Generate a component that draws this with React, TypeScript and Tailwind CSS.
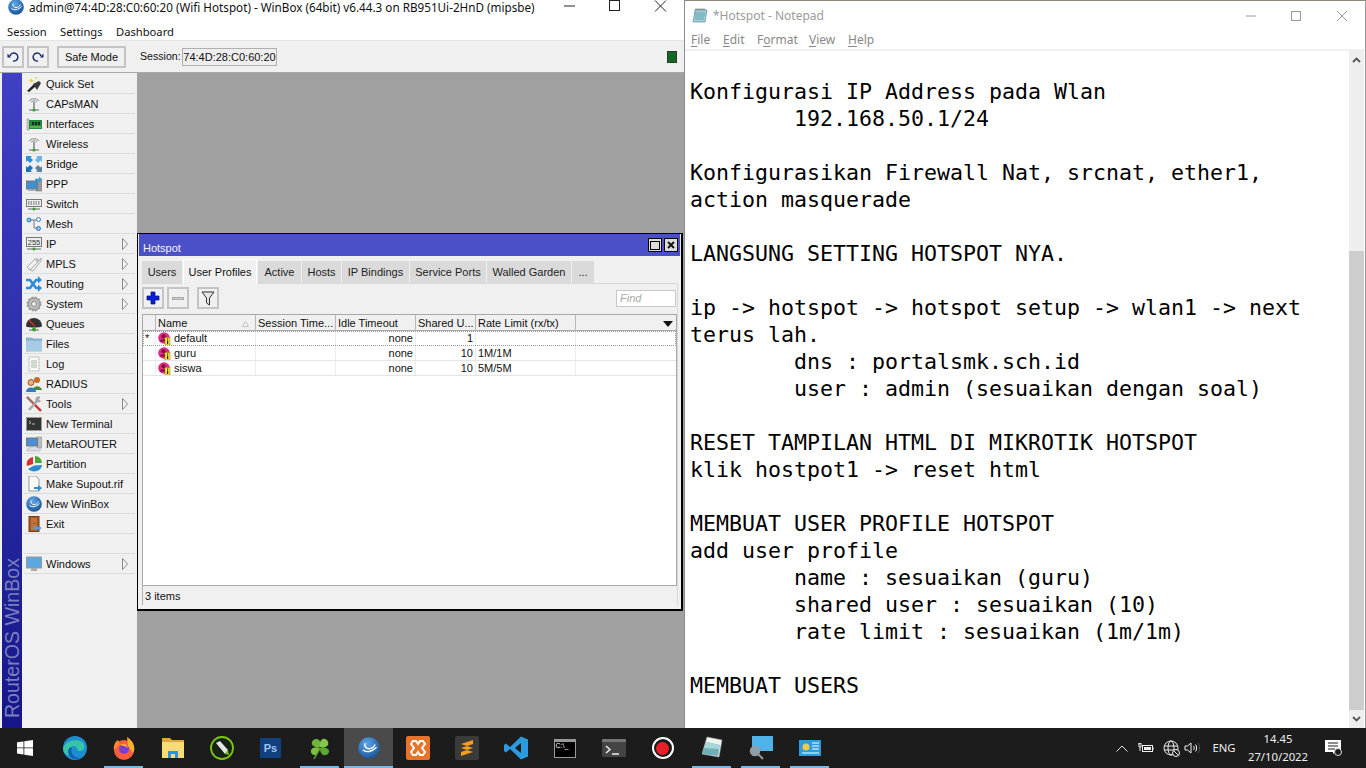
import React from "react";

const wb = { fontFamily: '"Liberation Sans", Arial, sans-serif' };
const seg = { fontFamily: '"Noto Sans", "Open Sans", sans-serif' };

function Sphere({ s = 16 }: { s?: number }) {
  return (
    <svg width={s} height={s} viewBox="0 0 16 16">
      <defs>
        <radialGradient id="sph" cx="0.4" cy="0.3" r="0.8">
          <stop offset="0" stopColor="#5fa8e8" />
          <stop offset="1" stopColor="#134a8e" />
        </radialGradient>
      </defs>
      <circle cx="8" cy="8" r="7.8" fill="url(#sph)" />
      <path d="M3.5 9.5C6 11.5 10 11 13.5 7.5M5 4.5C4.5 7 6 8.5 8 8.5S11.5 7.5 12.5 5.5" stroke="#fff" strokeWidth="1" fill="none" />
    </svg>
  );
}

const Antenna = () => (
  <svg width="16" height="16" viewBox="0 0 16 16">
    <path d="M3 5C5 2 11 2 13 5M5 6C6.5 4.5 9.5 4.5 11 6" stroke="#8a8a8a" fill="none" />
    <path d="M8 6V13" stroke="#777" strokeWidth="1.4" />
    <path d="M3 14H13" stroke="#666" />
    <circle cx="8" cy="14" r="1.6" fill="#2aa52a" />
  </svg>
);

function Icon({ n }: { n: string }) {
  switch (n) {
    case "wand":
      return (
        <svg width="16" height="16" viewBox="0 0 16 16">
          <path d="M1 15L8 8L10 10L3 16Z" fill="#222" />
          <path d="M7 8L13 5L15 7L11 14Z" fill="#3a3a3a" />
          <path d="M5 2L6 4L8 4L6.5 5.5L5 7L4 5L2 4.500L4 4Z" fill="#e8d44a" />
          <circle cx="10" cy="2" r="1" fill="#e8d44a" />
          <circle cx="13" cy="4" r="0.8" fill="#f3e98c" />
        </svg>
      );
    case "ant":
      return <Antenna />;
    case "if":
      return (
        <svg width="16" height="16" viewBox="0 0 16 16">
          <path d="M1 3H3V14H1Z" fill="#d8d8d8" stroke="#888" strokeWidth=".6" />
          <rect x="3" y="4" width="13" height="9" fill="#1f8a3a" />
          <rect x="6" y="6" width="2" height="3" fill="#222" />
          <rect x="9" y="6" width="2" height="3" fill="#222" />
          <rect x="12" y="6" width="2" height="3" fill="#222" />
          <path d="M4 11H15" stroke="#a8d060" />
        </svg>
      );
    case "bridge":
      return (
        <svg width="16" height="16" viewBox="0 0 16 16" fill="#2f8fd8">
          <path d="M0 0H6L4.500 1.500L7 4L4 7L1.500 4.500L0 6Z" />
          <path d="M16 0V6L14.500 4.500L12 7L9 4L11.500 1.500L10 0Z" fill="#6ab4ea" />
          <path d="M0 16V10L1.500 11.500L4 9L7 12L4.500 14.500L6 16Z" fill="#1a6fb8" />
          <path d="M16 16H10L11.500 14.500L9 12L12 9L14.500 11.500L16 10Z" fill="#5d7f9e" />
        </svg>
      );
    case "ppp":
      return (
        <svg width="16" height="16" viewBox="0 0 16 16">
          <rect x="10" y="3" width="6" height="12" fill="#9a9a9a" stroke="#666" strokeWidth=".5" />
          <rect x="0.500" y="5" width="11" height="8" fill="#3f8fd4" stroke="#777" />
          <rect x="2" y="13" width="8" height="2" fill="#aaa" />
          <path d="M9 3H13V0.500L16 3.500L13 6.500V5H9Z" fill="#3a9ae0" />
        </svg>
      );
    case "switch":
      return (
        <svg width="16" height="16" viewBox="0 0 16 16">
          <rect x="0.500" y="3.500" width="15" height="7" fill="#eee" stroke="#777" />
          <path d="M2 6H14M2 8H14" stroke="#555" strokeDasharray="1.500 1" />
          <path d="M2 13H14" stroke="#666" />
          <circle cx="8" cy="13" r="1.500" fill="#2aa52a" />
        </svg>
      );
    case "mesh":
      return (
        <svg width="16" height="16" viewBox="0 0 16 16">
          <path d="M3 4H8M8 4V12H12M8 4H12" stroke="#777" fill="none" />
          <circle cx="3" cy="4" r="2" fill="#8cc0ea" stroke="#2f78b8" />
          <circle cx="12.500" cy="3.500" r="2" fill="#fff" stroke="#2f78b8" />
          <circle cx="12.500" cy="12.500" r="2" fill="#8cc0ea" stroke="#2f78b8" />
        </svg>
      );
    case "ip":
      return (
        <svg width="16" height="16" viewBox="0 0 16 16">
          <rect x="0.500" y="1.500" width="15" height="9" fill="#eee" stroke="#777" />
          <text x="8" y="9" fontSize="7.5" textAnchor="middle" fill="#333" style={wb}>255</text>
          <path d="M1 13H15" stroke="#666" />
          <circle cx="8" cy="13" r="1.500" fill="#2aa52a" />
        </svg>
      );
    case "mpls":
      return (
        <svg width="16" height="16" viewBox="0 0 16 16" fill="#f0f0f0" stroke="#aaa">
          <path d="M1 11L9 3L12 3L12 6L4 14Z" />
          <path d="M4 14L12 6L15 2L15 5L7 15Z" />
          <circle cx="11" cy="4.500" r=".8" />
        </svg>
      );
    case "routing":
      return (
        <svg width="16" height="16" viewBox="0 0 16 16" fill="none" stroke="#2f8ad6" strokeWidth="2.600">
          <path d="M0 4H4L10 12H13" />
          <path d="M0 12H4L10 4H13" />
          <path d="M12 0L16 4L12 7.500Z" fill="#2f8ad6" strokeWidth="0" />
          <path d="M12 8.500L16 12L12 16Z" fill="#2f8ad6" strokeWidth="0" />
        </svg>
      );
    case "system":
      return (
        <svg width="16" height="16" viewBox="0 0 16 16">
          <circle cx="8" cy="8" r="6" fill="#bbb" stroke="#888" />
          <circle cx="8" cy="8" r="6.500" fill="none" stroke="#999" strokeWidth="2" strokeDasharray="2 1.400" />
          <circle cx="8" cy="8" r="2.500" fill="#f0f0f0" stroke="#888" />
        </svg>
      );
    case "queues":
      return (
        <svg width="16" height="16" viewBox="0 0 16 16">
          <path d="M0 10A8 8 0 0 1 16 10C16 12 0 12 0 10Z" fill="#333" />
          <path d="M3 4L8.500 10" stroke="#e03030" strokeWidth="1.300" />
          <path d="M3 14H13" stroke="#666" />
          <circle cx="8" cy="13.500" r="2" fill="#2aa52a" />
        </svg>
      );
    case "files":
      return (
        <svg width="16" height="16" viewBox="0 0 16 16">
          <path d="M0 2H6L7 3H16V15H0Z" fill="#8fbad8" stroke="#6a93b0" strokeWidth=".6" />
          <path d="M0 5H16V15H0Z" fill="#a7cbe4" />
        </svg>
      );
    case "log":
      return (
        <svg width="16" height="16" viewBox="0 0 16 16">
          <path d="M3 1H13V15H3Z" fill="#f8f8f8" stroke="#aaa" strokeDasharray="1 .5" />
          <path d="M5 5H11M5 7H11M5 9H11M5 11H11" stroke="#aab8a8" />
        </svg>
      );
    case "radius":
      return (
        <svg width="16" height="16" viewBox="0 0 16 16">
          <circle cx="11" cy="4" r="3" fill="#c86a20" />
          <path d="M7 14C7 9 15 9 16 14Z" fill="#4a8a3a" />
          <circle cx="5" cy="6.500" r="3" fill="#e8b080" stroke="#9a5a20" />
          <path d="M0 16C0 10 10 10 10 16Z" fill="#3a78c0" />
        </svg>
      );
    case "tools":
      return (
        <svg width="16" height="16" viewBox="0 0 16 16">
          <path d="M1 1L15 15" stroke="#d02a2a" strokeWidth="2.400" />
          <path d="M1 1L7 7" stroke="#888" strokeWidth="1.600" />
          <path d="M3 14L11 5" stroke="#aaa" strokeWidth="2.400" />
          <path d="M10 5A3 3 0 0 1 14 1L12.500 3.500L14.500 5A3 3 0 0 1 10 5Z" fill="#aaa" stroke="#888" strokeWidth=".5" />
        </svg>
      );
    case "term":
      return (
        <svg width="16" height="16" viewBox="0 0 16 16">
          <rect x="0.500" y="1.500" width="15" height="13" fill="#333" stroke="#999" />
          <path d="M3 5L5 6.500L3 8M6 8H9" stroke="#ddd" fill="none" strokeWidth=".8" />
        </svg>
      );
    case "meta":
      return (
        <svg width="16" height="16" viewBox="0 0 16 16">
          <rect x="11" y="1" width="5" height="11" fill="#bbb" stroke="#888" strokeWidth=".5" />
          <rect x="0.500" y="2" width="11" height="8" fill="#4a90d8" stroke="#777" />
          <path d="M1 15C0 12 4 11 5 12C6 10 11 10 11 12C14 11 15 14 14 15Z" fill="#d8dfe6" stroke="#999" strokeWidth=".5" />
        </svg>
      );
    case "part":
      return (
        <svg width="16" height="16" viewBox="0 0 16 16">
          <path d="M7 1A7 7 0 0 0 1 10L7 8Z" fill="#d83030" />
          <path d="M9 0A7 7 0 0 1 16 7H9Z" fill="#4aa83a" />
          <path d="M16 9A8 7 0 0 1 2 13L8 9.500Z" fill="#2a8ad0" />
        </svg>
      );
    case "supout":
      return (
        <svg width="16" height="16" viewBox="0 0 16 16">
          <path d="M3 0H10L13 3V15H3Z" fill="#fafafa" stroke="#999" />
          <path d="M8 11H12V9L16 12L12 15.500V13H8Z" fill="#2f8ad6" />
        </svg>
      );
    case "sphere":
      return <Sphere />;
    case "exit":
      return (
        <svg width="16" height="16" viewBox="0 0 16 16">
          <rect x="3" y="0.500" width="10" height="15" fill="#a85a28" stroke="#6e3a18" />
          <rect x="5" y="2" width="6" height="5" fill="#c07238" />
          <rect x="5" y="8" width="6" height="6" fill="#c07238" />
          <path d="M7 12L11 9V11H15V13H11V15Z" fill="#4aa0e0" />
        </svg>
      );
    case "win":
      return (
        <svg width="16" height="16" viewBox="0 0 16 16">
          <rect x="0.500" y="1" width="15" height="11" fill="#5aa8e0" stroke="#999" />
          <rect x="5" y="12" width="6" height="3" fill="#aaa" />
        </svg>
      );
  }
  return null;
}

const items: [string, string, boolean][] = [
  ["Quick Set", "wand", false],
  ["CAPsMAN", "ant", false],
  ["Interfaces", "if", false],
  ["Wireless", "ant", false],
  ["Bridge", "bridge", false],
  ["PPP", "ppp", false],
  ["Switch", "switch", false],
  ["Mesh", "mesh", false],
  ["IP", "ip", true],
  ["MPLS", "mpls", true],
  ["Routing", "routing", true],
  ["System", "system", true],
  ["Queues", "queues", false],
  ["Files", "files", false],
  ["Log", "log", false],
  ["RADIUS", "radius", false],
  ["Tools", "tools", true],
  ["New Terminal", "term", false],
  ["MetaROUTER", "meta", false],
  ["Partition", "part", false],
  ["Make Supout.rif", "supout", false],
  ["New WinBox", "sphere", false],
  ["Exit", "exit", false],
  ["", "", false],
  ["Windows", "win", true],
];

function Row({ label, icon, arrow }: { label: string; icon: string; arrow: boolean }) {
  return (
    <div className="h-5 ml-[2px] mr-[2px] flex items-center border-b border-[#dcdcdc] text-[11px] text-[#111] relative">
      <span className="w-[22px] pl-[2px] flex shrink-0">{icon && <Icon n={icon} />}</span>
      <span className="pt-[2px]">{label}</span>
      {arrow && (
        <svg className="ml-auto mr-[7px]" width="6" height="12" viewBox="0 0 6 12">
          <path d="M0.500 0.500L5.500 6L0.500 11.500Z" fill="#f4f4f4" stroke="#8a8a8a" />
        </svg>
      )}
    </div>
  );
}

function TbBtn({ children, w }: { children: React.ReactNode; w: string }) {
  return (
    <div className={`${w} h-[22px] border-2 border-[#c4c4c4] bg-[#f0f0f0] flex items-center justify-center text-[11px] text-[#111]`}>
      {children}
    </div>
  );
}

function UserIcon() {
  return (
    <svg width="13" height="13" viewBox="0 0 13 13" className="shrink-0">
      <circle cx="6" cy="6" r="5.800" fill="#e02a85" />
      <circle cx="5.500" cy="4.300" r="2" fill="#7a1040" />
      <path d="M1.500 9.500C3 6.500 8 6.500 9 9.500Z" fill="#7a1040" />
      <rect x="7" y="5.500" width="5" height="7.500" fill="#f6e73c" stroke="#8a7a00" strokeWidth=".5" />
      <rect x="9" y="6.500" width="1.200" height="1.200" fill="#222" />
      <rect x="9" y="8.500" width="1.200" height="3.500" fill="#222" />
    </svg>
  );
}

const cols = "grid grid-cols-[13px_100px_80px_80px_60px_100px_1fr]";

const tabs: [string, string][] = [
  ["Users", "w-[40px]"],
  ["User Profiles", "w-[74px]"],
  ["Active", "w-[43px]"],
  ["Hosts", "w-[39px]"],
  ["IP Bindings", "w-[67px]"],
  ["Service Ports", "w-[76px]"],
  ["Walled Garden", "w-[84px]"],
  ["...", "w-[22px]"],
];

const rows = [
  ["*", "default", "", "none", "1", ""],
  ["", "guru", "", "none", "10", "1M/1M"],
  ["", "siswa", "", "none", "10", "5M/5M"],
];

function Hotspot() {
  return (
    <div className="absolute left-0 top-[160px] w-[546px] h-[378px] border border-black border-r-2 border-b-2 bg-[#f0f0f0] flex flex-col text-[11px] text-[#111]" style={wb}>
      <div className="h-[22px] bg-[#4b50c8] text-white flex items-center pl-[4px] pr-[2px] shrink-0 border-l border-r border-[#e8e8e8]">
        <span className="text-[#f2f2f2] mt-[6px]">Hotspot</span>
        <div className="ml-auto flex gap-[2px]">
          <div className="w-[14px] h-[14px] bg-[#dcdcdc] border border-black flex items-center justify-center">
            <div className="w-[10px] h-[9px] border border-black" />
          </div>
          <div className="w-[14px] h-[14px] bg-[#dcdcdc] border border-black flex items-center justify-center">
            <svg width="8" height="8" viewBox="0 0 8 8"><path d="M1 1L7 7M7 1L1 7" stroke="#111" strokeWidth="1.800" /></svg>
          </div>
        </div>
      </div>
      <div className="h-[27px] pl-[4px] flex items-end gap-px shrink-0">
        {tabs.map(([t, w], i) =>
          i === 1 ? (
            <div key={t} className={`${w} h-[25px] bg-[#f0f0f0] border-t border-l border-r border-white flex items-start justify-center pt-[4px] -mb-px relative`}>{t}</div>
          ) : (
            <div key={t} className={`${w} h-[22px] bg-[#dadada] flex items-center justify-center text-[#222]`}>{t}</div>
          )
        )}
      </div>
      <div className="flex-1 flex flex-col ml-[4px] mr-[3px] mb-[4px] border-t border-r border-[#d8d8d8] min-h-0">
        <div className="h-[30px] flex items-start pt-[3px] shrink-0 pr-[1px]">
          <TbBtn w="w-[22px]">
            <svg width="14" height="14" viewBox="0 0 14 14"><path d="M5 1H9V5H13V9H9V13H5V9H1V5H5Z" fill="#0a1fd8" stroke="#00106a" strokeWidth=".7" /></svg>
          </TbBtn>
          <div className="w-[3px]" />
          <TbBtn w="w-[22px]">
            <div className="w-[12px] h-[3px] bg-[#cfcfcf] border border-[#aaa]" />
          </TbBtn>
          <div className="w-[8px]" />
          <TbBtn w="w-[22px]">
            <svg width="14" height="15" viewBox="0 0 14 15"><path d="M1 1H13L8.500 7V14L5.500 12V7Z" fill="#e6e6e6" stroke="#333" /></svg>
          </TbBtn>
          <div className="ml-auto mt-[3px] w-[60px] h-[17px] bg-white border border-[#c8c8c8] text-[#aaa] italic pl-[3px] leading-[15px]">Find</div>
        </div>
        <div className="flex-1 flex flex-col bg-white border border-[#a8a8a8] min-h-0 overflow-hidden">
          <div className={`${cols} h-[16px] bg-[#f0f0f0] border-b border-[#a8a8a8] shrink-0 leading-[17px]`}>
            <div className="border-r border-[#b8b8b8]" />
            <div className="border-r border-[#b8b8b8] pl-[2px] flex items-center">
              Name
              <svg className="ml-auto mr-[6px]" width="7" height="6" viewBox="0 0 7 6"><path d="M3.500 0.500L6.500 5.500H0.500Z" fill="#f4f4f4" stroke="#c0c0c0" /></svg>
            </div>
            <div className="border-r border-[#b8b8b8] pl-[2px] overflow-hidden whitespace-nowrap">Session Time...</div>
            <div className="border-r border-[#b8b8b8] pl-[2px] overflow-hidden whitespace-nowrap">Idle Timeout</div>
            <div className="border-r border-[#b8b8b8] pl-[2px] overflow-hidden whitespace-nowrap">Shared U...</div>
            <div className="border-r border-[#b8b8b8] pl-[2px] overflow-hidden whitespace-nowrap">Rate Limit (rx/tx)</div>
            <div className="flex items-center justify-end pr-[3px]">
              <svg width="10" height="6" viewBox="0 0 10 6"><path d="M0 0H10L5 6Z" fill="#111" /></svg>
            </div>
          </div>
          {rows.map((r, i) => (
            <div key={r[1]} className={`${cols} h-[15px] shrink-0 leading-[14px] border-b ${i === 0 ? "border-dotted border-[#777] outline-1 outline-dotted outline-[#999] -outline-offset-1" : "border-[#e4e4e4]"}`}>
              <div className="border-r border-[#ececec] pl-[2px] text-[11px]">{r[0]}</div>
              <div className="border-r border-[#ececec] pl-[2px] flex items-center gap-[3px]"><UserIcon />{r[1]}</div>
              <div className="border-r border-[#ececec]" />
              <div className="border-r border-[#ececec] text-right pr-[2px]">{r[3]}</div>
              <div className="border-r border-[#ececec] text-right pr-[2px]">{r[4]}</div>
              <div className="border-r border-[#ececec] pl-[2px]">{r[5]}</div>
              <div />
            </div>
          ))}
        </div>
        <div className="h-[19px] shrink-0 pl-[2px] pt-[2px] flex items-center border-l border-[#b0b0b0]">3 items</div>
      </div>
    </div>
  );
}

function WinBox() {
  return (
    <div className="w-[684px] h-[728px] flex flex-col bg-white shrink-0 overflow-hidden">
      <div className="h-5 flex items-center relative overflow-hidden shrink-0" style={seg}>
        <div className="ml-[8px] -mt-[6px] flex"><Sphere /></div>
        <span className="ml-[5px] -mt-[5px] text-[11.7px] text-[#111] whitespace-nowrap">admin@74:4D:28:C0:60:20 (Wifi Hotspot) - WinBox (64bit) v6.44.3 on RB951Ui-2HnD (mipsbe)</span>
        <div className="ml-auto -mt-[8px] flex items-center">
          <svg width="46" height="12" viewBox="0 0 46 12"><path d="M18 6H29" stroke="#222" /></svg>
          <svg width="46" height="12" viewBox="0 0 46 12"><rect x="17.500" y="0.500" width="10" height="10" fill="none" stroke="#222" /></svg>
          <svg width="46" height="12" viewBox="0 0 46 12"><path d="M17 0.500L28 11.500M28 0.500L17 11.500" stroke="#222" /></svg>
        </div>
      </div>
      <div className="h-[21px] flex items-center text-[11.2px] text-[#111] shrink-0 pl-[7px] pt-[5px] border-b border-[#e4e4e4]" style={seg}>
        <span className="w-[53px]">Session</span>
        <span className="w-[56px]">Settings</span>
        <span>Dashboard</span>
      </div>
      <div className="h-[32px] bg-[#f0f0f0] border-b border-[#a8a8a8] flex items-center pl-[2px] pt-[1px] text-[11px] text-[#111] shrink-0" style={wb}>
        <TbBtn w="w-[22px]">
          <svg width="12" height="12" viewBox="0 0 12 12" fill="none" stroke="#1a2a6a" strokeWidth="1.500"><path d="M3 5A4 4 0 1 1 6 10" /><path d="M0.500 2.500L4 6.500L0.500 6.500Z" fill="#1a2a6a" strokeWidth="0" /></svg>
        </TbBtn>
        <div className="w-[3px]" />
        <TbBtn w="w-[22px]">
          <svg width="12" height="12" viewBox="0 0 12 12" fill="none" stroke="#1a2a6a" strokeWidth="1.500"><path d="M9 5A4 4 0 1 0 6 10" /><path d="M11.500 2.500L8 6.500L11.500 6.500Z" fill="#1a2a6a" strokeWidth="0" /></svg>
        </TbBtn>
        <div className="w-[8px]" />
        <TbBtn w="w-[69px]">Safe Mode</TbBtn>
        <span className="ml-[14px] mr-[2px] w-[40px] text-[10.6px]">Session:</span>
        <div className="w-[95px] h-[18px] border border-[#b0b0b0] bg-[#eeeeee] flex items-center justify-center leading-none">74:4D:28:C0:60:20</div>
        <div className="ml-auto mr-[7px] w-[10px] h-[12px] bg-[#0f6b1e] border border-[#333]" />
      </div>
      <div className="flex-1 flex min-h-0">
        <div className="w-[137px] bg-[#f0f0f0] shrink-0 flex" style={wb}>
          <div className="ml-[2px] w-[20px] shrink-0 bg-gradient-to-b from-[#4040c4] to-[#16168a] flex items-end justify-center pb-[10px] overflow-hidden">
            <span className="[writing-mode:vertical-rl] rotate-180 text-[19.6px] text-[#7b80bc] whitespace-nowrap leading-[20px]">RouterOS WinBox</span>
          </div>
          <div className="flex-1 pt-px min-w-0">
            {items.map((it, i) => <Row key={i} label={it[0]} icon={it[1]} arrow={it[2]} />)}
          </div>
        </div>
        <div className="flex-1 bg-[#a0a0a0] relative min-w-0">
          <Hotspot />
        </div>
      </div>
    </div>
  );
}

const lines = [
  "",
  "Konfigurasi IP Address pada Wlan",
  "        192.168.50.1/24",
  "",
  "Konfigurasikan Firewall Nat, srcnat, ether1,",
  "action masquerade",
  "",
  "LANGSUNG SETTING HOTSPOT NYA.",
  "",
  "ip -> hotspot -> hotspot setup -> wlan1 -> next",
  "terus lah.",
  "        dns : portalsmk.sch.id",
  "        user : admin (sesuaikan dengan soal)",
  "",
  "RESET TAMPILAN HTML DI MIKROTIK HOTSPOT",
  "klik hostpot1 -> reset html",
  "",
  "MEMBUAT USER PROFILE HOTSPOT",
  "add user profile",
  "        name : sesuaikan (guru)",
  "        shared user : sesuaikan (10)",
  "        rate limit : sesuaikan (1m/1m)",
  "",
  "MEMBUAT USERS",
  "",
];

function U({ c }: { c: string }) {
  return <span className="underline underline-offset-2">{c}</span>;
}

function Notepad() {
  return (
    <div className="flex-1 h-[728px] flex flex-col bg-white border-l border-r border-t border-l-[#8c8c8c] border-r-[#9a9a9a] border-t-[#8f8a78] overflow-hidden min-w-0">
      <div className="h-[30px] flex items-center shrink-0 pl-[7px]" style={seg}>
        <svg width="16" height="16" viewBox="0 0 16 16">
          <path d="M3 2H15L13 14H1Z" fill="#9fd0dc" stroke="#5b8a98" strokeWidth=".7" />
          <path d="M4 2V0.500M6 2V0.500M8 2V0.500M10 2V0.500M12 2V0.500" stroke="#555" />
          <path d="M3 5H13M3 7H13M3 9H12M3 11H12" stroke="#6aa2b0" />
        </svg>
        <span className="ml-[5px] text-[12px] text-[#9b9b9b]">*Hotspot - Notepad</span>
        <div className="ml-auto flex items-center -mt-[1px]">
          <svg width="46" height="12" viewBox="0 0 46 12"><path d="M19 6H29" stroke="#9a9a9a" /></svg>
          <svg width="46" height="12" viewBox="0 0 46 12"><rect x="18.500" y="1.500" width="9" height="9" fill="none" stroke="#9a9a9a" /></svg>
          <svg width="46" height="12" viewBox="0 0 46 12"><path d="M18 1L28 11M28 1L18 11" stroke="#9a9a9a" /></svg>
        </div>
      </div>
      <div className="h-[20px] flex items-center text-[12px] text-[#888] shrink-0 pl-[6px] border-b-2 border-[#f0f0f0]" style={seg}>
        <span className="w-[32px]"><U c="F" />ile</span>
        <span className="w-[34px]"><U c="E" />dit</span>
        <span className="w-[52px]">F<U c="o" />rmat</span>
        <span className="w-[39px]"><U c="V" />iew</span>
        <span><U c="H" />elp</span>
      </div>
      <div className="flex-1 flex min-h-0">
        <div className="flex-1 pl-[5px] overflow-hidden text-black whitespace-pre text-[21.6px] leading-[27px]" style={{ fontFamily: '"DejaVu Sans Mono", monospace' }}>
          {lines.map((l, i) => <div key={i} className="h-[27px]">{l}</div>)}
        </div>
        <div className="w-[15px] bg-[#eeeeee] flex flex-col shrink-0 mr-px">
          <div className="h-[200px] flex justify-center pt-[6px]">
            <svg width="9" height="6" viewBox="0 0 9 6"><path d="M1 5L4.500 1.500L8 5" stroke="#555" strokeWidth="1.800" fill="none" /></svg>
          </div>
          <div className="flex-1 bg-[#cdcdcd]" />
          <div className="h-[18px] flex justify-center items-center">
            <svg width="9" height="6" viewBox="0 0 9 6"><path d="M1 1L4.500 4.500L8 1" stroke="#555" strokeWidth="1.800" fill="none" /></svg>
          </div>
        </div>
      </div>
    </div>
  );
}

function Tb({ children, open, active }: { children: React.ReactNode; open?: boolean; active?: boolean }) {
  return (
    <div className={`w-[49px] h-10 flex items-center justify-center relative ${active ? "bg-[#4a4a4a]" : ""}`}>
      {children}
      {open && <div className={`absolute bottom-0 h-[2px] bg-[#76b9ed] ${active ? "inset-x-0" : "inset-x-[5px]"}`} />}
    </div>
  );
}

function Taskbar() {
  return (
    <div className="h-10 bg-[#1c1c1c] flex items-center shrink-0 text-white" style={seg}>
      <div className="w-[50px] h-10 flex items-center justify-center">
        <svg width="16" height="16" viewBox="0 0 16 16" fill="#fff"><path d="M0 2.300L6.500 1.400V7.500H0ZM7.300 1.300L16 0V7.500H7.300ZM0 8.300H6.500V14.500L0 13.600ZM7.300 8.300H16V16L7.300 14.700Z" /></svg>
      </div>
      <Tb>
        <svg width="24" height="24" viewBox="0 0 24 24">
          <circle cx="12" cy="12" r="12" fill="#1d8fd0" />
          <path d="M0 13C2 5 12 2 19 6C23 9 22 15 17 15C13 15 15 10 11 10C6 10 4 16 7 20C3 19 0 16 0 13Z" fill="#37c5a8" />
          <path d="M9 12C7 16 10 22 17 22C14 24 8 23 6 19C4 15 6 10 9 12Z" fill="#0d5fb0" />
        </svg>
      </Tb>
      <Tb open>
        <svg width="24" height="24" viewBox="0 0 24 24">
          <circle cx="12" cy="14" r="10" fill="#ff5d3b" />
          <path d="M15 1C22 5 24 13 21 17L16 10Z" fill="#ffb02e" />
          <path d="M2 14C1 9 4 5 6 4L8 8Z" fill="#ff8a2e" />
          <circle cx="12" cy="13" r="5" fill="#7a3fd0" />
          <path d="M8 9C12 6 16 9 16 12C14 10 11 10 8 9Z" fill="#ffa52e" />
        </svg>
      </Tb>
      <Tb>
        <svg width="22" height="20" viewBox="0 0 22 20">
          <path d="M0 0H8L10 2H22V6H0Z" fill="#e2a92f" />
          <rect y="4" width="22" height="16" fill="#f7dc77" />
          <rect x="6" y="13" width="10" height="7" fill="#2f92dd" />
          <rect x="9" y="16" width="4" height="4" fill="#f7dc77" />
        </svg>
      </Tb>
      <Tb>
        <svg width="24" height="24" viewBox="0 0 24 24">
          <circle cx="12" cy="12" r="11" fill="#162212" stroke="#7ac70c" strokeWidth="1.800" />
          <path d="M6 7L10 5L18 14L15 18Z" fill="#e6e6e6" />
          <path d="M15 18L18 14L19 19Z" fill="#7ac70c" />
        </svg>
      </Tb>
      <Tb>
        <div className="w-[21px] h-[20px] bg-[#12407e] flex items-center justify-center text-[11px] font-bold text-[#9ec8f0]" style={wb}>Ps</div>
      </Tb>
      <Tb open>
        <svg width="24" height="24" viewBox="0 0 24 24" fill="#6db83a">
          <path d="M12 11C6 12 3 9 4 6C5 3 9 2 11 4C13 6 13 9 12 11Z" />
          <path d="M12 11C11 7 13 2 17 3C21 4 21 9 19 10C17 12 14 12 12 11Z" fill="#82c84a" />
          <path d="M12 12C16 11 22 12 21 16C20 20 15 20 14 18C12 16 12 14 12 12Z" fill="#5aa82e" />
          <path d="M12 12C11 16 9 20 6 19C2 18 2 13 5 12C7 11 10 11 12 12Z" fill="#7ac03e" />
          <path d="M12 12L6 23" stroke="#5aa82e" strokeWidth="1.500" />
        </svg>
      </Tb>
      <Tb open active><Sphere s={22} /></Tb>
      <Tb>
        <div className="w-[24px] h-[24px] bg-[#e8742c] rounded-[2px] flex items-center justify-center">
          <svg width="18" height="18" viewBox="0 0 18 18" fill="none" stroke="#fff" strokeWidth="2"><path d="M4 2H7L9 5L11 2H14L16 5L13 9L16 13L14 16H11L9 13L7 16H4L2 13L5 9L2 5Z" /></svg>
        </div>
      </Tb>
      <Tb>
        <div className="w-[24px] h-[24px] bg-[#3a3a3a] rounded-[2px] flex items-center justify-center">
          <svg width="14" height="16" viewBox="0 0 14 16" fill="#f99d1c"><path d="M13 0V4L1 8V4ZM1 8L13 12V8L1 4ZM13 8V12L1 16V12Z" /></svg>
        </div>
      </Tb>
      <Tb>
        <svg width="24" height="24" viewBox="0 0 24 24">
          <path d="M17 0.500L24 3.500V20.500L17 23.500L6 13L2 16.500L0 15V9L2 7.500L6 11Z" fill="#2b9be0" />
          <path d="M17 7L11 12L17 17Z" fill="#1c1c1c" />
        </svg>
      </Tb>
      <Tb>
        <div className="w-[22px] h-[19px] bg-black border border-[#999] border-t-[3px] flex items-start pl-px">
          <span className="text-[7px] text-white leading-[8px]" style={wb}>C:\_</span>
        </div>
      </Tb>
      <Tb>
        <div className="w-[24px] h-[18px] bg-[#444] rounded-[1px] border-t-[3px] border-[#777] flex items-center pl-[3px]">
          <svg width="16" height="10" viewBox="0 0 16 10" fill="none" stroke="#eee" strokeWidth="1.500"><path d="M1 1L5 4.500L1 8M7 9H14" /></svg>
        </div>
      </Tb>
      <Tb>
        <div className="w-[22px] h-[22px] rounded-full border-2 border-white flex items-center justify-center">
          <div className="w-[13px] h-[13px] rounded-full bg-[#e8202a]" />
        </div>
      </Tb>
      <Tb open>
        <svg width="24" height="24" viewBox="0 0 24 24">
          <path d="M7 1L22 4L19 21L2 18Z" fill="#f0f0ee" stroke="#aaa" strokeWidth=".5" />
          <path d="M6 6L20 9L18 20L2 18Z" fill="#6fb0b8" />
          <path d="M6 6L20 9L19 13L4 12Z" fill="#a8d6d8" />
        </svg>
      </Tb>
      <Tb open>
        <svg width="24" height="24" viewBox="0 0 24 24">
          <rect x="3" y="0" width="21" height="15" fill="#4fb3ea" />
          <circle cx="6" cy="15" r="4.500" fill="#8aa0ac" stroke="#9a9a9a" strokeWidth="1.500" />
          <path d="M9 18L14 23" stroke="#9a9a9a" strokeWidth="2" />
        </svg>
      </Tb>
      <Tb open>
        <svg width="22" height="16" viewBox="0 0 22 16">
          <rect width="22" height="16" fill="#2f9ae0" />
          <circle cx="7" cy="7" r="3.500" fill="#f5c94a" />
          <path d="M13 3H20M13 6H20M13 9H20M3 13H20" stroke="#fff" />
        </svg>
      </Tb>
      <div className="flex-1" />
      <div className="w-[24px] flex justify-center">
        <svg width="12" height="7" viewBox="0 0 12 7" fill="none" stroke="#e6e6e6"><path d="M0.500 6.500L6 1L11.500 6.500" /></svg>
      </div>
      <div className="w-[24px] mr-[2px] flex justify-center">
        <svg width="16" height="11" viewBox="0 0 16 11" fill="none" stroke="#eee">
          <rect x="4.500" y="2.500" width="10" height="6" />
          <rect x="6" y="4" width="7" height="3" fill="#eee" stroke="none" />
          <path d="M15 4V7M0 1L3 0V4H1V1M2 4V8" />
        </svg>
      </div>
      <div className="w-[22px] flex justify-center">
        <svg width="17" height="17" viewBox="0 0 17 17" fill="none" stroke="#eee">
          <circle cx="8" cy="8" r="7" />
          <ellipse cx="8" cy="8" rx="3" ry="7" />
          <path d="M1 6H15M1 10H15" />
          <circle cx="13" cy="13" r="3.500" fill="#1c1c1c" />
          <path d="M11 11L15 15" />
        </svg>
      </div>
      <div className="w-[20px] flex justify-center">
        <svg width="16" height="14" viewBox="0 0 16 14" fill="none" stroke="#eee">
          <path d="M1 5H3.500L7 2V12L3.500 9H1Z" />
          <path d="M9.500 5C10.500 6 10.500 8 9.500 9M11.500 3.500C13 5 13 9 11.500 10.500" />
          <path d="M14 2C16 5 16 9 14 12" stroke="#555" />
        </svg>
      </div>
      <div className="w-[34px] text-center text-[11.3px] text-[#eee] ml-[5px]">ENG</div>
      <div className="w-[74px] text-center text-[11.3px] leading-[18px] text-[#eee]">
        <div>14.45</div>
        <div>27/10/2022</div>
      </div>
      <div className="w-[36px] flex justify-center">
        <svg width="17" height="16" viewBox="0 0 17 16">
          <path d="M0 0H16V12H10L8 14V12H0Z" fill="#fff" />
          <path d="M3 3H13M3 6H13M3 9H10" stroke="#1c1c1c" />
          <circle cx="13" cy="12" r="3.500" fill="#1c1c1c" stroke="#ddd" />
        </svg>
      </div>
      <div className="w-[15px]" />
    </div>
  );
}

export default function App() {
  return (
    <div className="w-[1366px] h-[768px] flex flex-col overflow-hidden bg-white">
      <div className="flex h-[728px] shrink-0">
        <WinBox />
        <Notepad />
      </div>
      <Taskbar />
    </div>
  );
}
